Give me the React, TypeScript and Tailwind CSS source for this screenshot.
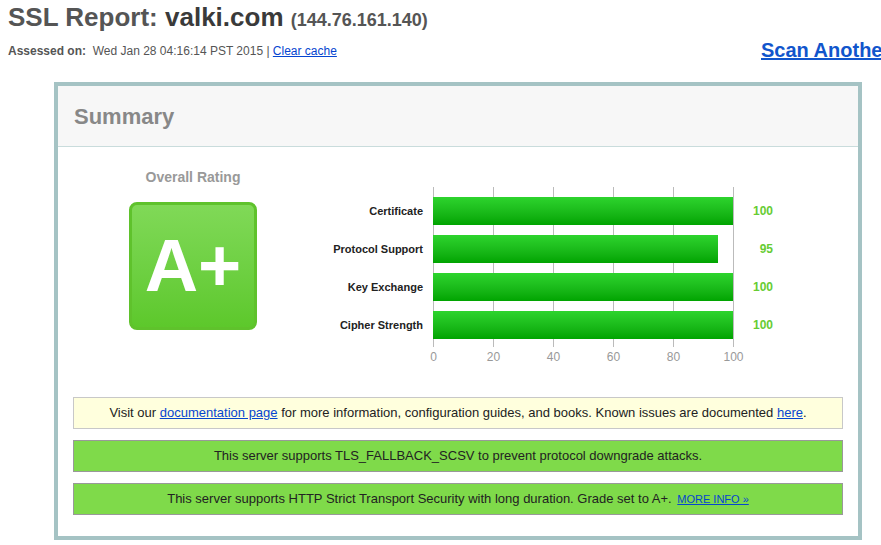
const rows = [
  { label: "Certificate", value: 100 },
  { label: "Protocol Support", value: 95 },
  { label: "Key Exchange", value: 100 },
  { label: "Cipher Strength", value: 100 },
];

const ticks = [0, 20, 40, 60, 80, 100];

function Chart() {
  return (
    <div className="flex mt-[40px] ml-[26px]">
      {/* labels */}
      <div className="w-[150px] pt-[10px] pr-[10px] flex flex-col gap-[10px]">
        {rows.map((r) => (
          <div key={r.label} className="h-[28px] flex items-center justify-end text-[11px] font-bold text-[#222]">
            {r.label}
          </div>
        ))}
      </div>
      {/* bars */}
      <div className="relative w-[301px]">
        {ticks.map((t) => (
          <div key={t} className="absolute top-0 h-[160px] w-px bg-[#bbb]" style={{ left: t * 3 }} />
        ))}
        {ticks.map((t) => (
          <div
            key={"l" + t}
            className="absolute top-[164px] -translate-x-1/2 text-[12px] leading-none text-[#999]"
            style={{ left: t * 3 + 0.5 }}
          >
            {t}
          </div>
        ))}
        <div className="relative pt-[10px] flex flex-col gap-[10px] h-[160px]">
          {rows.map((r) => (
            <div key={r.label} className="h-[28px]">
              <div
                className="h-full bg-gradient-to-b from-[#2dd42d] to-[#00a400]"
                style={{ width: r.value * 3 }}
              />
            </div>
          ))}
        </div>
      </div>
      {/* values */}
      <div className="w-[39px] pt-[10px] flex flex-col gap-[10px]">
        {rows.map((r) => (
          <div key={r.label} className="h-[28px] flex items-center justify-end text-[12px] font-bold text-[#6c3]">
            {r.value}
          </div>
        ))}
      </div>
    </div>
  );
}

export default function App() {
  return (
    <div className="w-[881px] h-[545px] overflow-hidden bg-white font-['Liberation_Sans',Arial,sans-serif]">
      <div className="pl-[8px] pt-[3px] whitespace-nowrap">
        <h1 className="h-[28px] text-[26px] leading-[28px] font-bold text-[#555]">
          SSL Report: <span className="text-[#3a3a3a]">valki.com</span>{" "}
          <span className="text-[18px] text-[#555]">(144.76.161.140)</span>
        </h1>
        <div className="flex items-start mt-[13px] h-[14px]">
          <div className="w-[753px] shrink-0 text-[12px] leading-[14px] text-[#555]">
            <b>Assessed on:</b>&nbsp; Wed Jan 28 04:16:14 PST 2015 |{" "}
            <a href="#" className="text-[#0645d0] underline">Clear cache</a>
          </div>
          <a href="#" className="shrink-0 -mt-[6px] text-[20px] leading-[24px] font-bold text-[#1155cc] underline">
            Scan Another &raquo;
          </a>
        </div>
      </div>

      <div className="ml-[54px] mt-[24px] w-[808px] border-4 border-[#a5c3c4] bg-white">
        <div className="h-[61px] bg-[#f7f7f7] border-b border-[#c9dcdc] flex items-center pl-[16px]">
          <h2 className="text-[22px] font-bold text-[#888]">Summary</h2>
        </div>

        <div className="h-[250px] flex">
          <div className="ml-[71px] w-[128px] pt-[22px] flex flex-col items-center">
            <div className="text-[14px] leading-[16px] font-bold text-[#999]">Overall Rating</div>
            <div className="mt-[17px] w-[128px] h-[128px] rounded-[8px] border-[3px] border-[#5fc22c] bg-gradient-to-b from-[#80d957] to-[#5dc82b] flex items-center justify-center">
              <span className="text-[74px] leading-none font-bold text-white">A+</span>
            </div>
          </div>
          <Chart />
        </div>

        <div className="px-[15px] pb-[21px] flex flex-col gap-[11px] text-[#222]">
          <div className="h-[32px] border border-[#c8c8c8] bg-[#ffffdd] flex items-center justify-center text-[13px]">
            <span>
              Visit our <a href="#" className="text-[#0645d0] underline">documentation page</a> for more information,
              configuration guides, and books. Known issues are documented{" "}
              <a href="#" className="text-[#0645d0] underline">here</a>.
            </span>
          </div>
          <div className="h-[32px] border border-[#999] bg-[#7fda4a] flex items-center justify-center text-[13px]">
            This server supports TLS_FALLBACK_SCSV to prevent protocol downgrade attacks.
          </div>
          <div className="h-[32px] border border-[#999] bg-[#7fda4a] flex items-center justify-center text-[13px]">
            <span>
              This server supports HTTP Strict Transport Security with long duration. Grade set to A+.{" "}
              <a href="#" className="ml-[2px] text-[11px] text-[#0645d0] underline">MORE INFO &raquo;</a>
            </span>
          </div>
        </div>
      </div>
    </div>
  );
}
